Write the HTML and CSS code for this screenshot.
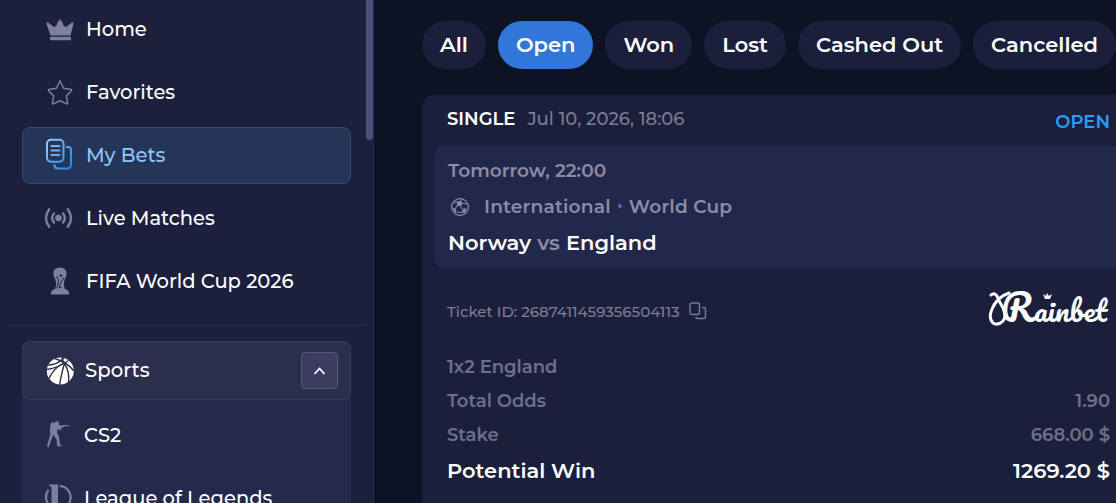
FILE: index.html
```
<!DOCTYPE html>
<html lang="en">

<head>
    <meta charset="UTF-8">
    <meta name="viewport" content="width=device-width, initial-scale=1.0">
    <title>My Bets</title>
    <link rel="stylesheet" href="styles.css">
</head>

<body>
    <div class="app">
        <aside class="sidebar">
            <div class="scroll-thumb"></div>
            <nav class="menu">
                <a class="menu-item">
                    <svg class="icon" viewBox="0 0 30 30" fill="#7e7f9d">
                        <path d="M5.500 21.500 L1.500 10 Q1.200 7.500 3.200 8.500 L9 13 L11.500 11.500 L12.500 8.500 L15 5 L17.500 8.500 L18.500 11.500 L21 13 L26.800 8.500 Q28.800 7.500 28.500 10 L25.500 21.500Z" />
                        <rect x="5" y="22.800" width="21" height="3.400" rx="1" />
                    </svg>
                    <span>Home</span>
                </a>
                <a class="menu-item">
                    <svg class="icon" viewBox="0 0 30 30" fill="none" stroke="#7e7f9d" stroke-width="1.500" stroke-linejoin="round">
                        <path d="M15 3.800 L18.600 11.300 L26.300 12.500 Q27 13 26.300 13.700 L21.300 19 L22.700 26.200 Q22.500 27.200 21.700 26.900 L15 23.700 L8.300 26.900 Q7.500 27.200 7.300 26.200 L8.700 19 L3.700 13.700 Q3 13 3.700 12.500 L11.400 11.300Z" />
                    </svg>
                    <span>Favorites</span>
                </a>
                <a class="menu-item active">
                    <svg class="icon" viewBox="0 0 30 30" fill="none" stroke="url(#blue)" stroke-width="2" stroke-linecap="round">
                        <defs>
                            <linearGradient id="blue" gradientUnits="userSpaceOnUse" x1="2" y1="4" x2="27" y2="26">
                                <stop offset="0" stop-color="#8fc6ff" />
                                <stop offset="1" stop-color="#178af0" />
                            </linearGradient>
                        </defs>
                        <rect x="2" y="-0.200" width="16.500" height="22" rx="4" />
                        <path d="M6.500 6h8M6.500 10.500h8M6.500 15h8" />
                        <path d="M21.500 7h1.500q3 0 3 3v14.500q0 4-4 4h-9q-3.500 0-3.500-3.500" />
                    </svg>
                    <span>My Bets</span>
                </a>
                <a class="menu-item">
                    <svg class="icon" viewBox="0 0 30 30" fill="none" stroke="#7e7f9d" stroke-width="2.400" stroke-linecap="round">
                        <circle cx="13.500" cy="15" r="3.300" fill="#7e7f9d" stroke="none" />
                        <path d="M9 10.500q-3.800 4.500 0 9M18 10.500q3.800 4.500 0 9" />
                        <path d="M4.200 6.200q-6.500 8.800 0 17.600M22.800 6.200q6.500 8.800 0 17.600" />
                    </svg>
                    <span>Live Matches</span>
                </a>
                <a class="menu-item">
                    <svg class="icon" viewBox="0 0 30 30" fill="#7e7f9d">
                        <path d="M15 1.500c-4.500 0-7 3-6.500 6.500.3 3 1.500 4.500 2.200 6.500.8 3 .3 5-.5 8.500h9.600c-.8-3.500-1.300-5.500-.5-8.500.7-2 1.900-3.500 2.200-6.500.5-3.500-2-6.500-6.500-6.500z" />
                        <path d="M9 23h12l1.500 1.500q1.500.5 1.500 2v2H6v-2q0-1.500 1.500-2z" />
                        <path d="M11.500 10l2 3.500-.5 5-1.500 4M19 11.500q-1.500 2.500-2.500 3.500l-2.500 6.500h2.500" fill="none" stroke="#1c203c" stroke-width="1" />
                        <circle cx="16" cy="9.500" r="1.200" fill="#1c203c" />
                    </svg>
                    <span>FIFA World Cup 2026</span>
                </a>
            </nav>
            <div class="divider"></div>
            <section class="sports">
                <div class="sports-header">
                    <svg class="icon" viewBox="0 0 30 30">
                        <circle cx="15.300" cy="15" r="13.500" fill="#fff" />
                        <g fill="none" stroke="#2c2e4e" stroke-width="1.400">
                            <path d="M3 9Q12 9 19 2M2 13.500Q13 12 23.500 4.500M9.500 2.500Q22 6 29 15" />
                            <path d="M4 22.500Q8 13 18.500 7M14.500 29Q17 15 19.500 7.500M23.500 26.500Q25 16 19.500 7.500M17 1.500Q17 5 20 7.500" />
                        </g>
                    </svg>
                    <span>Sports</span>
                    <button class="collapse">
                        <svg width="14" height="10" viewBox="0 0 14 10" fill="none" stroke="#fff" stroke-width="1.800"><path d="M1.500 8l5-5.500 5 5.500" /></svg>
                    </button>
                </div>
                <a class="menu-item sub">
                    <svg class="icon" viewBox="0 0 30 30" fill="#7e7f9d">
                        <path d="M10 3q0-1.800 2-1.800t2.200 2l-.4 1.800 2 .6h2.200V4.900h3V5.300h2v-.5h.6v.6h.6v.8h-5v1h-2.500l-.5 2.300-1.500.8-1-1.500-1.300 1.200-.4 2.800 2.200 4.500.6 7 2 1.200v.8h-4.500l-.8-7-3.400-4.500-2.300 6.500-1.400 4-.2 1.800H2.200l.3-3 1.500-5 1.500-6-.8-2.500.8-5.500 1.500-3z" />
                    </svg>
                    <span>CS2</span>
                </a>
                <a class="menu-item sub">
                    <svg class="icon" viewBox="0 0 30 30" fill="#7e7f9d">
                        <path d="M3.500 1.500h9.500v24h8l-3 3.500h-14l2.500-3V4.500z" />
                        <path d="M3.500 7q-5 6.500 0 14.500M14.500 3a11.300 11.300 0 0 1 7.500 19.500" fill="none" stroke="#7e7f9d" stroke-width="2.200" />
                    </svg>
                    <span>League of Legends</span>
                </a>
            </section>
        </aside>

        <main class="content">
            <div class="tabs">
                <button class="tab">All</button>
                <button class="tab selected">Open</button>
                <button class="tab">Won</button>
                <button class="tab">Lost</button>
                <button class="tab">Cashed Out</button>
                <button class="tab">Cancelled</button>
            </div>
            <article class="ticket">
                <header class="ticket-header">
                    <span>SINGLE</span>
                    <span class="date">Jul 10, 2026, 18:06</span>
                    <span class="status">OPEN</span>
                </header>
                <div class="event">
                    <div class="event-row">Tomorrow, 22:00</div>
                    <div class="event-row league">
                        <svg class="ball" viewBox="0 0 20 20" fill="none" stroke="#8b8ca6" stroke-width="1.200">
                            <circle cx="10" cy="10" r="8.400" />
                            <path d="M7 4.500l3.800-.8 2 2.600-2 3.200-4-.8zM12.500 12.500l3-1.500 1 2-2 3-2.500-.5zM2.500 10.500l3 1 1 3.500-1.500 1z" fill="#8b8ca6" stroke="none" />
                            <path d="M10.800 3.700l2-1.700M12.500 6.300l4.500.7M10.800 9.500l2 3M6.800 8.700l-1.300 3M6.500 15l5.500.5M7 4.500L4 6" stroke-width="1" />
                        </svg>
                        <span>International</span>
                        <svg class="sep" width="5" height="6" viewBox="0 0 5 6"><path d="M0.500 0l4 3-4 3z" fill="#6b6d8c" /></svg>
                        <span>World Cup</span>
                    </div>
                    <div class="event-row teams">
                        <span>Norway</span>
                        <span class="vs">vs</span>
                        <span>England</span>
                    </div>
                </div>
                <div class="ticket-id">
                    <span>Ticket ID: 2687411459356504113</span>
                    <svg class="copy" viewBox="0 0 18 18" fill="none" stroke="#7b7c96" stroke-width="1.400">
                        <rect x="1" y="1" width="9.500" height="11.500" rx="2" />
                        <path d="M13 5.500h1.500q2 0 2 2v7q0 2-2 2H9q-2 0-2-1.500" />
                    </svg>
                    <svg class="logo" viewBox="0 0 122 44" fill="#fff">
                        <path d="M3 6q3-3 6 1 3 7 6 12 4 8 0 13-5 5-10 2-5-5-1-14Q9 8 21 4" fill="none" stroke="#fff" stroke-width="3" stroke-linecap="round" />
                        <text class="logo-text" x="13" y="33" textLength="106" lengthAdjust="spacingAndGlyphs"><tspan class="logo-cap">R</tspan>ainbet</text>
                        <path d="M57 10l-2-5 3 2 1-3 2 3 3-2-2 5z" />
                    </svg>
                </div>
                <dl class="summary">
                    <div class="row"><dt>1x2 England</dt></div>
                    <div class="row"><dt>Total Odds</dt><dd>1.90</dd></div>
                    <div class="row"><dt>Stake</dt><dd>668.00 $</dd></div>
                    <div class="row win"><dt>Potential Win</dt><dd>1269.20 $</dd></div>
                </dl>
            </article>
        </main>
    </div>
</body>

</html>
```
FILE: styles.css
```
* {
    box-sizing: border-box;
}

body {
    margin: 0;
    font-family: 'Montserrat', 'Inter', sans-serif;
    background-color: #0e1225;
    color: #fff;
    overflow: hidden;
}

button {
    font-family: inherit;
    color: inherit;
    border: none;
    padding: 0;
    cursor: pointer;
}

.app {
    display: flex;
    height: 503px;
    overflow: hidden;
}

/* Sidebar */
.sidebar {
    position: relative;
    flex: none;
    width: 374px;
    background-color: #1c203c;
    border-right: 1px solid #25294a;
    overflow: hidden;
}

.scroll-thumb {
    position: absolute;
    top: -10px;
    right: 0;
    width: 7px;
    height: 150px;
    border-radius: 4px;
    background-color: #504f7c;
}

.menu {
    display: flex;
    flex-direction: column;
    gap: 6px;
    padding: 1px 22px 0;
}

.menu-item {
    display: flex;
    align-items: center;
    width: 329px;
    height: 57px;
    padding: 0 0 2px 22px;
    border: 1px solid transparent;
    border-radius: 8px;
    font-size: 19.5px;
    font-weight: 500;
    white-space: nowrap;
}

.menu-item.active {
    background-color: #243558;
    border-color: #354a70;
    color: #92c5fb;
}

.icon {
    flex: none;
    width: 30px;
    height: 30px;
    margin-right: 11px;
    overflow: visible;
}

.divider {
    height: 1px;
    margin: 15px 6px 15px 8px;
    background-color: #2a2e4e;
}

.sports {
    width: 329px;
    margin-left: 22px;
    background-color: #242a4b;
    border-radius: 8px 8px 0 0;
}

.sports-header {
    display: flex;
    align-items: center;
    height: 59px;
    padding: 0 12px 0 22px;
    background-color: #2c2e4e;
    border: 1px solid #393b5d;
    border-radius: 8px;
    font-size: 19.7px;
    font-weight: 500;
}

.sports-header .icon {
    margin-right: 10px;
}

.sports-header span {
    padding-bottom: 1px;
}

.collapse {
    display: flex;
    align-items: center;
    justify-content: center;
    width: 37px;
    height: 37px;
    margin-left: auto;
    background-color: #3c3c60;
    border: 1px solid #56567c;
    border-radius: 4px;
}

.menu-item.sub {
    height: 63px;
    padding: 0 0 0 22px;
}

.sub:nth-child(2) {
    margin-top: 3px;
}

.sub .icon {
    margin-right: 9px;
}

/* Tabs */
.content {
    flex: none;
    width: 742px;
    padding: 21px 0 0 48px;
    overflow: hidden;
}

.tabs {
    display: flex;
    gap: 12px;
    width: 710px;
}

.tab {
    flex: none;
    height: 48px;
    padding: 0 18px 2px;
    border-radius: 24px;
    background-color: #1b1f3b;
    font-size: 21px;
    font-weight: 600;
    white-space: nowrap;
}

.tab.selected {
    background-color: #3276d9;
}

/* Ticket */
.ticket {
    width: 710px;
    height: 430px;
    margin-top: 26px;
    padding-left: 13px;
    background-color: #1b1f3b;
    border-radius: 12px;
    font-size: 18px;
    font-weight: 600;
    white-space: nowrap;
}

.ticket-header {
    display: flex;
    align-items: center;
    width: 675px;
    height: 51px;
    padding: 0 0 4px 12px;
}

.date {
    margin-left: 12px;
    color: #7b7c96;
    font-weight: 500;
}

.status {
    margin: 6px 0 0 auto;
    color: #2b9df4;
}

.event {
    height: 122px;
    padding: 7px 13px;
    background-color: #22284b;
    border-radius: 8px;
    color: #8b8ca6;
    font-size: 18.6px;
}

.event-row {
    display: flex;
    align-items: center;
    height: 36px;
    padding-bottom: 2px;
}

.league {
    letter-spacing: 0.2px;
}

.ball {
    width: 20px;
    height: 20px;
    margin: 1px 14px 0 2px;
}

.sep {
    margin: 0 6px 0 7px;
}

.teams {
    gap: 6px;
    font-size: 21px;
    color: #fff;
}

.vs {
    color: #8b8ca6;
}

.ticket-id {
    display: flex;
    align-items: center;
    height: 44px;
    margin: 21px 0 0 12px;
    color: #7b7c96;
    font-size: 15px;
    font-weight: 500;
}

.copy {
    width: 18px;
    height: 18px;
    margin-left: 9px;
}

.logo {
    width: 122px;
    height: 44px;
    margin-left: 281px;
    overflow: visible;
}

.logo-text {
    font-family: 'Pacifico', 'Kaushan Script', cursive;
    font-size: 28px;
    font-weight: 400;
}

.logo-cap {
    font-size: 36px;
}

/* Summary */
.summary {
    width: 663px;
    margin: 17px 0 0 12px;
    color: #6e708b;
}

.row {
    display: flex;
    align-items: center;
    justify-content: space-between;
    height: 34px;
}

.row dd {
    margin: 0;
}

.row.win {
    height: 38px;
    padding-bottom: 2px;
    color: #fff;
    font-size: 21px;
}
```
